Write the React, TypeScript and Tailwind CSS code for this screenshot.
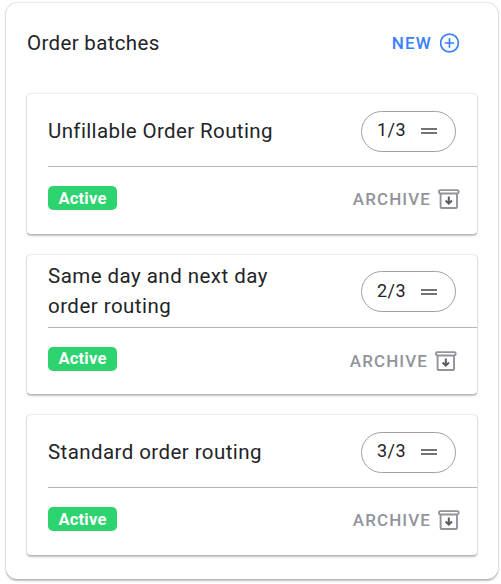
import { clsx } from "clsx";

type Batch = { title: string; order: string; titleClass: string; footer: string };

const batches: Batch[] = [
  { title: "Unfillable Order Routing", order: "1/3", titleClass: "mt-[2px] tracking-[0.38px]", footer: "pr-[17px] pt-[22px]" },
  { title: "Same day and next day order routing", order: "2/3", titleClass: "mt-px tracking-[0.46px]", footer: "pr-5 pt-[23px]" },
  { title: "Standard order routing", order: "3/3", titleClass: "mt-[2px] tracking-[0.42px]", footer: "pr-[17px] pt-[22px]" },
];

function AddIcon() {
  return (
    <svg width="20" height="20" viewBox="0 0 20 20" fill="none" stroke="#3880ff" strokeWidth="1.7" strokeLinecap="round">
      <circle cx="9.5" cy="10" r="8.9" />
      <path d="M9.5 5.9v8.2M5.4 10h8.2" />
    </svg>
  );
}

function ArchiveIcon() {
  return (
    <svg width="22" height="20" viewBox="0 0 22 20" fill="none" stroke="#92949c" strokeWidth="1.9">
      <rect x="1" y="1.1" width="19.6" height="3.4" rx="1.2" />
      <path d="M2.6 4.5V17.4a1.6 1.6 0 0 0 1.6 1.6H17.4a1.6 1.6 0 0 0 1.6-1.6V4.5" />
      <path d="M10.8 7.6v7M7.6 11.5l3.2 3.1 3.2-3.1" stroke="#5d5d5f" strokeWidth="2" />
    </svg>
  );
}

function BatchCard({ batch }: { batch: Batch }) {
  return (
    <article className="flex h-[139.5px] flex-col rounded-[4px] bg-white pl-[21px] shadow-[0_1.5px_2px_rgba(0,0,0,0.24),0_0_2px_rgba(0,0,0,0.22)]">
      <div className="flex h-[73px] shrink-0 items-center justify-between border-b border-[#b5b5b5] pr-[21px]">
        <h2 className={clsx("w-[240px] text-[20.5px] leading-[30px]", batch.titleClass)}>{batch.title}</h2>
        <div className="mt-0.5 flex h-[41px] w-[95px] items-center gap-4 rounded-full border border-[#a0a0a0] pl-[15px]">
          <span className="w-[28px] -translate-y-px text-[18px] leading-6 tracking-[0.5px]">{batch.order}</span>
          <span className="flex h-[6px] w-[16px] flex-col justify-between">
            <i className="h-[2px] bg-[#737373]" />
            <i className="h-[2px] bg-[#737373]" />
          </span>
        </div>
      </div>
      <div className="flex items-start justify-between">
        <span className="mt-[19px] flex h-6 w-[69px] items-center justify-center rounded-[5px] bg-[#2dd36f] pt-px text-[16.5px] font-bold leading-6 tracking-[0.2px] text-white">
          Active
        </span>
        <button className={clsx("flex items-center gap-[7px] text-[#92949c]", batch.footer)}>
          <span className="text-[17px] font-medium leading-5 tracking-[1.1px]">ARCHIVE</span>
          <ArchiveIcon />
        </button>
      </div>
    </article>
  );
}

export default function App() {
  return (
    <div className="h-[584px] w-[501px] overflow-hidden bg-white pl-1.5 pt-[3px] font-[Roboto,sans-serif] text-[#222428]">
      <main className="h-[576px] w-[492px] rounded-[11px] bg-white px-[21px] shadow-[0_1.5px_2px_rgba(0,0,0,0.24),0_0_2px_rgba(0,0,0,0.24)]">
        <header className="flex h-[91px] items-start justify-between pr-[17px] pt-[25px]">
          <h1 className="text-[20.5px] leading-[30px] tracking-[0.34px]">Order batches</h1>
          <button className="mt-[5px] flex items-center gap-2 text-[#3880ff]">
            <span className="text-[17px] font-medium leading-5 tracking-[1.2px]">NEW</span>
            <AddIcon />
          </button>
        </header>
        <section className="flex flex-col gap-[21px]">
          {batches.map((batch) => (
            <BatchCard key={batch.order} batch={batch} />
          ))}
        </section>
      </main>
    </div>
  );
}
